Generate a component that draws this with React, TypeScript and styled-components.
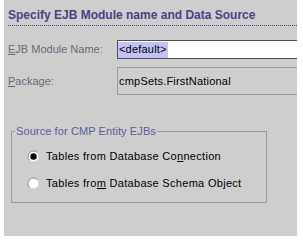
import {createGlobalStyle} from 'styled-components';
import styled from 'styled-components';

const GlobalStyle = createGlobalStyle`
	html, body {
		margin: 0;
		padding: 0;
		background: #ffffff;
	}
	body {
		font-family: 'Liberation Sans', Arial, sans-serif;
		font-size: 11px;
	}
`;

const options = [
	{label: 'Tables from Database Connection', mnemonic: 23, checked: true},
	{label: 'Tables from Database Schema Object', mnemonic: 10, checked: false},
];

// renders text with one underlined mnemonic character
const Mnemonic = ({text, index}: {text: string; index: number}) => (
	<>
		{text.slice(0, index)}
		<U>{text[index]}</U>
		{text.slice(index + 1)}
	</>
);

const Radio = ({checked}: {checked: boolean}) => (
	<RadioIcon width="13" height="13" viewBox="0 0 13 13">
		<circle cx="6.5" cy="6.5" r="5.5" fill="#ffffff" stroke="#8a8a8a" strokeWidth="1" />
		<path d="M 2.6 10.4 A 5.5 5.5 0 0 0 10.4 2.6" fill="none" stroke="#f4f4f4" strokeWidth="1" />
		{checked && <circle cx="6.5" cy="6.5" r="3.2" fill="#000000" />}
	</RadioIcon>
);

const App = () => (
	<>
		<GlobalStyle />
		<Panel>
			<Header>
				<Title>Specify EJB Module name and Data Source</Title>
			</Header>
			<Form>
				<Label>
					<Mnemonic text="EJB Module Name:" index={0} />
				</Label>
				<TextField>
					<Selected>&lt;default&gt;</Selected>
				</TextField>
				<Label>
					<Mnemonic text="Package:" index={0} />
				</Label>
				<ReadOnlyField>cmpSets.FirstNational</ReadOnlyField>
			</Form>
			<Group>
				<Legend>Source for CMP Entity EJBs</Legend>
				{options.map(o => (
					<Option key={o.label}>
						<Radio checked={o.checked} />
						<OptionText>
							<Mnemonic text={o.label} index={o.mnemonic} />
						</OptionText>
					</Option>
				))}
			</Group>
		</Panel>
	</>
);

export default App;

const Panel = styled('div')`
	margin-left: 4px;
	width: 293px;
	height: 236px;
	background: #cecece;
	display: flex;
	flex-direction: column;
`;

const Header = styled('div')`
	margin-left: 4px;
	padding: 8px 0 3px;
	border-bottom: 1px dotted #4b4185;
`;

const Title = styled('div')`
	font-size: 12px;
	font-weight: bold;
	line-height: 14px;
	color: #4b4185;
`;

const Form = styled('div')`
	margin-top: 14px;
	padding-left: 4px;
	display: grid;
	grid-template-columns: 109px 1fr;
	grid-template-rows: 19px 28px;
	row-gap: 8px;
	align-items: center;
`;

const U = styled('span')`
	text-decoration: underline;
`;

const Label = styled('div')`
	color: #6a6a78;
	line-height: 13px;
`;

const TextField = styled('div')`
	height: 19px;
	box-sizing: border-box;
	background: #ffffff;
	border: 1px solid #505050;
	border-right: none;
	padding: 1px 0 0 0;
	display: flex;
	align-items: stretch;
`;

const Selected = styled('span')`
	background: #c2c2f6;
	color: #000000;
	padding: 0 1px 0 1px;
	line-height: 15px;
	letter-spacing: 0.2px;
`;

const ReadOnlyField = styled('div')`
	height: 28px;
	box-sizing: border-box;
	border: 1px solid #9c9c9c;
	border-right: none;
	padding-left: 1px;
	display: flex;
	align-items: center;
	color: #000000;
	letter-spacing: 0.2px;
`;

const Group = styled('fieldset')`
	margin: 30px 0 0 7px;
	width: 256px;
	box-sizing: border-box;
	padding: 5px 0 0 0;
	height: 78px;
	border: 1px solid #9a9a9a;
	min-inline-size: auto;
`;

const Legend = styled('legend')`
	margin-left: 3px;
	padding: 0 1px;
	color: #5c5c9a;
	line-height: 13px;
	letter-spacing: 0.1px;
`;

const Option = styled('div')`
	display: flex;
	align-items: center;
	gap: 6px;
	padding-left: 15px;
	height: 27px;
	color: #000000;
`;

const RadioIcon = styled('svg')`
	flex: none;
	display: block;
`;

const OptionText = styled('span')`
	line-height: 13px;
	letter-spacing: 0.3px;
`;
